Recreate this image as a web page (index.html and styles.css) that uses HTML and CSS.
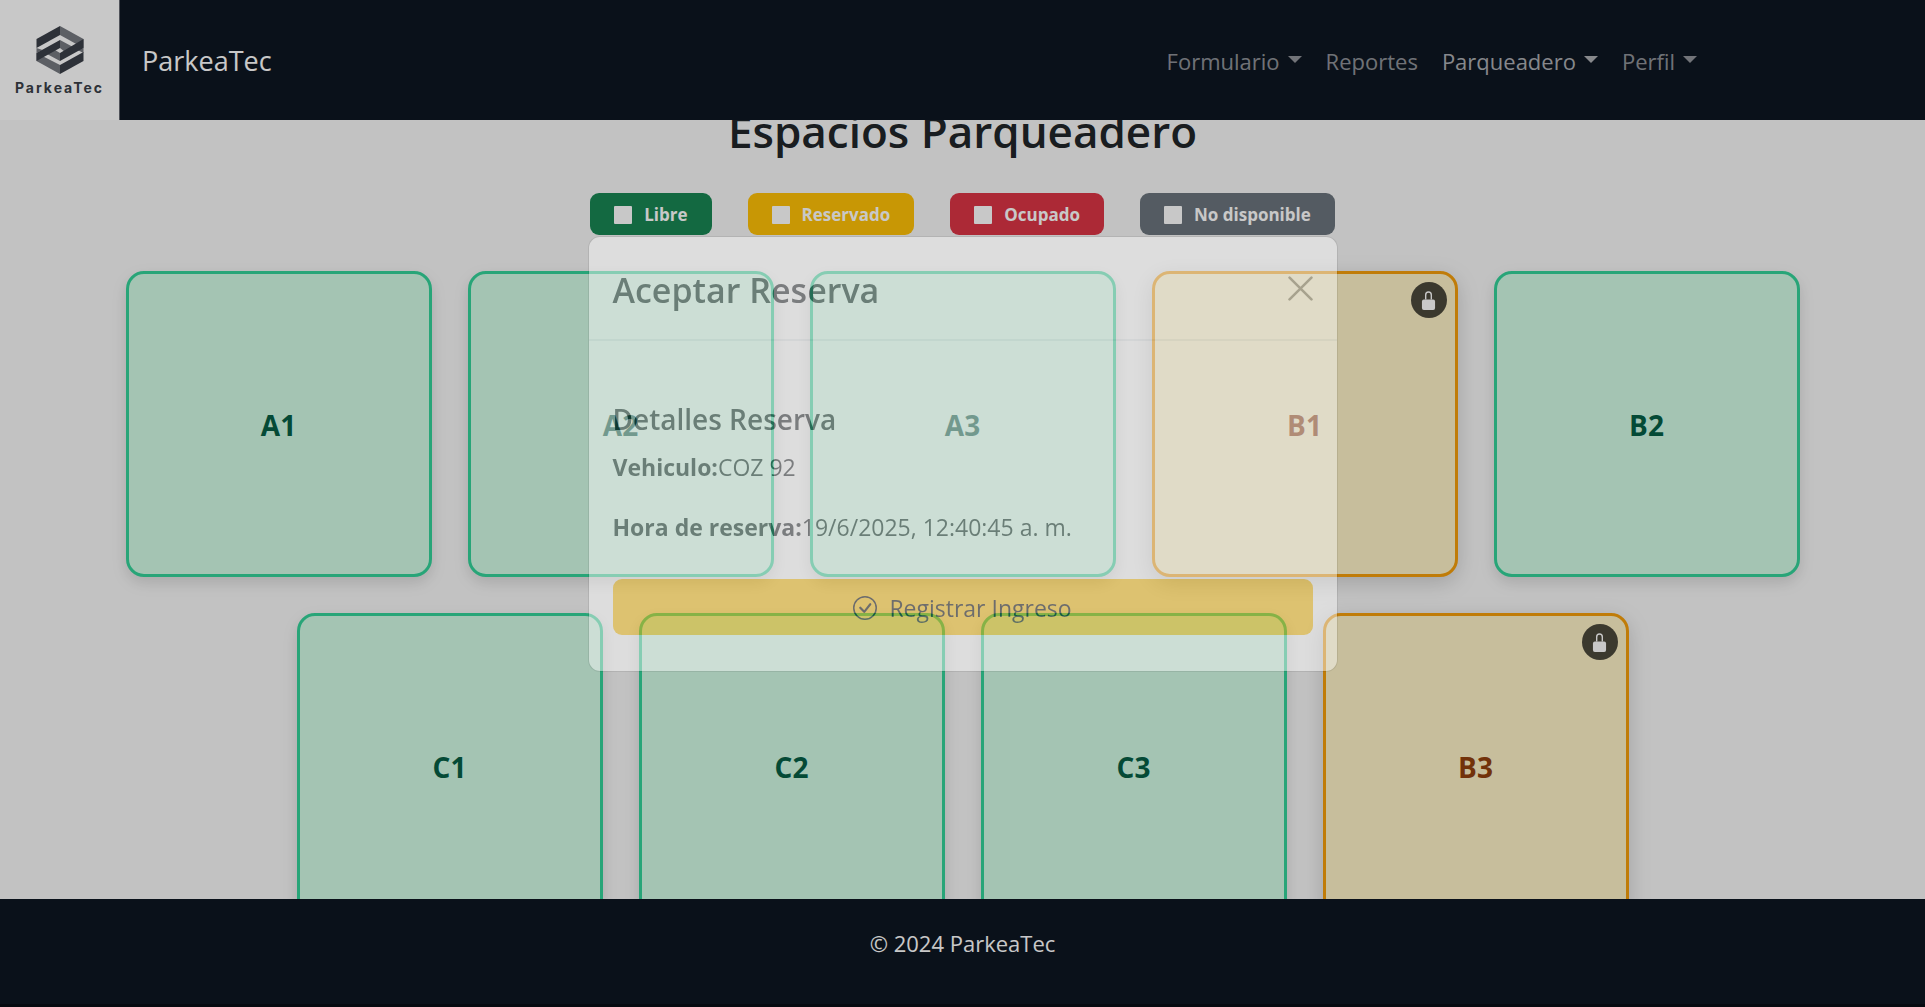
FILE: index.html
```html
<!DOCTYPE html>
<html lang="es">
<head>
<meta charset="utf-8">
<meta name="viewport" content="width=device-width, initial-scale=1">
<title>ParkeaTec</title>
<link rel="stylesheet" href="styles.css">
</head>
<body class="modal-open">
<header class="navbar">
  <a class="logo" href="#" aria-label="Inicio">
    <svg class="logo-mark" viewBox="0 0 48 48" aria-hidden="true">
      <path fill="#767980" d="M24 0 47.500 13v9L24 9z"/>
      <path fill="#3a3f48" d="M24 0 .5 13v9L24 9z"/>
      <path fill="#767980" d="M.5 22v5l6-3zM47.500 22v5l-6-3z"/>
      <path fill="#767980" d="M24 14 37 21l-8 5-5-4zM11 28l8-4 5 3v8z"/>
      <path fill="#767980" d="M.5 27 24 39v9L.5 35z"/>
      <path fill="#3a3f48" d="M47.500 26v9L24 48v-9z"/>
      <path fill="#3a3f48" d="M.5 27 24 14v8L.5 35zM24 27 47.500 13v9L24 35z"/>
    </svg>
    <span class="logo-name">ParkeaTec</span>
  </a>
  <a class="brand" href="#">ParkeaTec</a>
  <nav class="menu">
    <a class="menu-link caret" href="#">Formulario</a>
    <a class="menu-link" href="#">Reportes</a>
    <a class="menu-link caret active" href="#">Parqueadero</a>
    <a class="menu-link caret" href="#">Perfil</a>
  </nav>
</header>

<main class="content">
  <h1 class="title">Espacios Parqueadero</h1>
  <div class="legend">
    <span class="badge free"><i class="square"></i>Libre</span>
    <span class="badge reserved"><i class="square"></i>Reservado</span>
    <span class="badge busy"><i class="square"></i>Ocupado</span>
    <span class="badge disabled"><i class="square"></i>No disponible</span>
  </div>
  <div class="spaces">
    <button class="space">A1</button>
    <button class="space">A2</button>
    <button class="space">A3</button>
    <button class="space taken">B1<span class="lock"><svg viewBox="0 0 16 20" aria-hidden="true"><path fill="none" stroke="#fff" stroke-width="1.500" d="M5 9V4a3 3 0 0 1 6 0v5"/><rect x="1" y="9" width="14" height="11" rx="2" fill="#fff"/></svg></span></button>
    <button class="space">B2</button>
    <button class="space">C1</button>
    <button class="space">C2</button>
    <button class="space">C3</button>
    <button class="space taken">B3<span class="lock"><svg viewBox="0 0 16 20" aria-hidden="true"><path fill="none" stroke="#fff" stroke-width="1.500" d="M5 9V4a3 3 0 0 1 6 0v5"/><rect x="1" y="9" width="14" height="11" rx="2" fill="#fff"/></svg></span></button>
  </div>
</main>

<footer class="footer">© 2024 ParkeaTec</footer>

<div class="backdrop"></div>
<div class="modal" role="dialog" aria-labelledby="modal-title">
  <div class="dialog">
    <div class="modal-header">
      <h2 class="modal-title" id="modal-title">Aceptar Reserva</h2>
      <button class="close" aria-label="Cerrar"><svg viewBox="0 0 24 24" aria-hidden="true"><path d="M1.500 1.500l21 21M22.500 1.500l-21 21" fill="none" stroke="#000" stroke-width="2.500" stroke-linecap="round"/></svg></button>
    </div>
    <div class="modal-body">
      <h3 class="subtitle">Detalles Reserva</h3>
      <p class="detail"><strong>Vehiculo:</strong>COZ 92</p>
      <p class="detail"><strong>Hora de reserva:</strong>19/6/2025, 12:40:45 a. m.</p>
      <button class="submit"><svg viewBox="0 0 16 16" fill="currentColor" aria-hidden="true"><path d="M8 15A7 7 0 1 1 8 1a7 7 0 0 1 0 14m0 1A8 8 0 1 0 8 0a8 8 0 0 0 0 16"/><path d="m10.970 4.970-.02.022-3.473 4.425-2.093-2.094a.75.75 0 0 0-1.060 1.060L6.970 11.030a.75.75 0 0 0 1.079-.02l3.992-4.990a.75.75 0 0 0-1.071-1.050"/></svg>Registrar Ingreso</button>
    </div>
  </div>
</div>
</body>
</html>
```
FILE: styles.css
```css
* {
  box-sizing: border-box;
}

body {
  margin: 0;
  padding-top: 102px;
  background: #f8f8f8;
  color: #212529;
  font-family: "Open Sans", "Noto Sans", sans-serif;
  font-size: 22px;
  line-height: 36px;
}

.modal-open {
  overflow: hidden;
}

a {
  color: inherit;
  text-decoration: none;
}

button {
  font: inherit;
  cursor: pointer;
}

h1,
h2,
h3,
p {
  margin: 0;
}

/* Barra superior */
.navbar {
  position: fixed;
  inset: 0 0 auto;
  z-index: 10;
  display: flex;
  align-items: center;
  height: 120px;
  padding-right: 228px;
  background: #0e1622;
  color: #fff;
}

.logo {
  display: flex;
  flex-direction: column;
  align-items: center;
  justify-content: center;
  gap: 4px;
  width: 120px;
  height: 120px;
  padding-top: 4px;
  border-right: 1px solid #666a73;
  background: #fff;
  color: #3a3f48;
}

.logo-mark {
  width: 48px;
  height: 48px;
}

.logo-name {
  font: 700 14px/20px "Inter", sans-serif;
  letter-spacing: 2px;
}

.brand {
  margin-left: 22px;
  padding-top: 2px;
  font-size: 27px;
}

.menu {
  display: flex;
  gap: 24px;
  margin-left: auto;
  padding-top: 2px;
}

.menu-link {
  display: flex;
  align-items: center;
  gap: 8px;
  color: rgba(255, 255, 255, .55);
}

.menu-link.active {
  color: rgba(255, 255, 255, .66);
}

.caret::after {
  content: "";
  margin-bottom: 4px;
  border: 7px solid transparent;
  border-top-color: currentColor;
  border-bottom: 0;
}

/* Contenido */
.title {
  font-size: 44px;
  font-weight: 600;
  line-height: 58px;
  text-align: center;
}

.legend {
  display: flex;
  justify-content: center;
  gap: 36px;
  margin: 33px 0 36px;
}

.badge {
  display: flex;
  align-items: center;
  gap: 12px;
  padding: 10px 24px 8px;
  border-radius: 9px;
  color: #fff;
  font-size: 17px;
  font-weight: 700;
  line-height: 24px;
}

.square {
  width: 18px;
  height: 18px;
  border-radius: 1px;
  background: #fff;
}

.free {
  background: #198754;
}

.reserved {
  background: #ffc107;
}

.busy {
  background: #dc3545;
}

.disabled {
  background: #6c757d;
}

.spaces {
  display: flex;
  flex-wrap: wrap;
  justify-content: center;
  gap: 36px;
  padding: 0 96px;
}

.space {
  position: relative;
  width: 306px;
  aspect-ratio: 1;
  padding: 2px 0 0;
  border: 3px solid #34d399;
  border-radius: 18px;
  background: #d1fae5;
  box-shadow: 0 6px 15px rgba(0, 0, 0, .13);
  color: #065f46;
  font-size: 28px;
  font-weight: 700;
}

.space.taken {
  border-color: #f59e0b;
  background: #fef3c7;
  box-shadow: 0 6px 22px rgba(0, 0, 0, .17);
  color: #92400e;
}

.lock {
  position: absolute;
  top: 8px;
  right: 8px;
  display: grid;
  place-items: center;
  width: 36px;
  height: 36px;
  border-radius: 50%;
  background: rgba(0, 0, 0, .7);
}

.lock svg {
  width: 15px;
  height: 19px;
}

/* Pie */
.footer {
  position: fixed;
  inset: auto 0 0;
  z-index: 10;
  padding: 26px 24px 43px;
  border-bottom: 3px solid #080d15;
  background: #0e1622;
  color: #fff;
  text-align: center;
}

/* Ventana modal */
.backdrop {
  position: fixed;
  inset: 0;
  z-index: 20;
  background: rgba(0, 0, 0, .215);
}

.modal {
  position: fixed;
  inset: 0;
  z-index: 30;
  display: flex;
  align-items: center;
  justify-content: center;
  padding-bottom: 100px;
  font-size: 23px;
  opacity: .44;
}

.dialog {
  width: 750px;
  border: 1px solid rgba(0, 0, 0, .18);
  border-radius: 12px;
  background: #fff;
  background-clip: padding-box;
}

.modal-header {
  display: flex;
  align-items: flex-start;
  justify-content: space-between;
  padding: 24px 24px 22px;
  border-bottom: 2px solid #e9ecef;
}

.modal-title {
  padding-top: 2px;
  font-size: 34px;
  font-weight: 600;
  line-height: 54px;
}

.close {
  display: flex;
  margin-top: 15px;
  padding: 0;
  border: 0;
  background: none;
  opacity: .5;
}

.close svg {
  width: 25px;
  height: 25px;
}

.modal-body {
  padding: 60px 24px 36px;
}

.subtitle {
  margin-bottom: 12px;
  font-size: 28px;
  font-weight: 600;
  line-height: 36px;
}

.detail {
  margin-bottom: 24px;
  line-height: 36px;
}

.submit {
  display: flex;
  align-items: center;
  justify-content: center;
  gap: 12px;
  width: 100%;
  height: 56px;
  margin-top: 34px;
  padding: 2px 0 0;
  border: 0;
  border-radius: 9px;
  background: #ffc107;
  color: #000;
}

.submit svg {
  width: 24px;
  height: 24px;
}
```
